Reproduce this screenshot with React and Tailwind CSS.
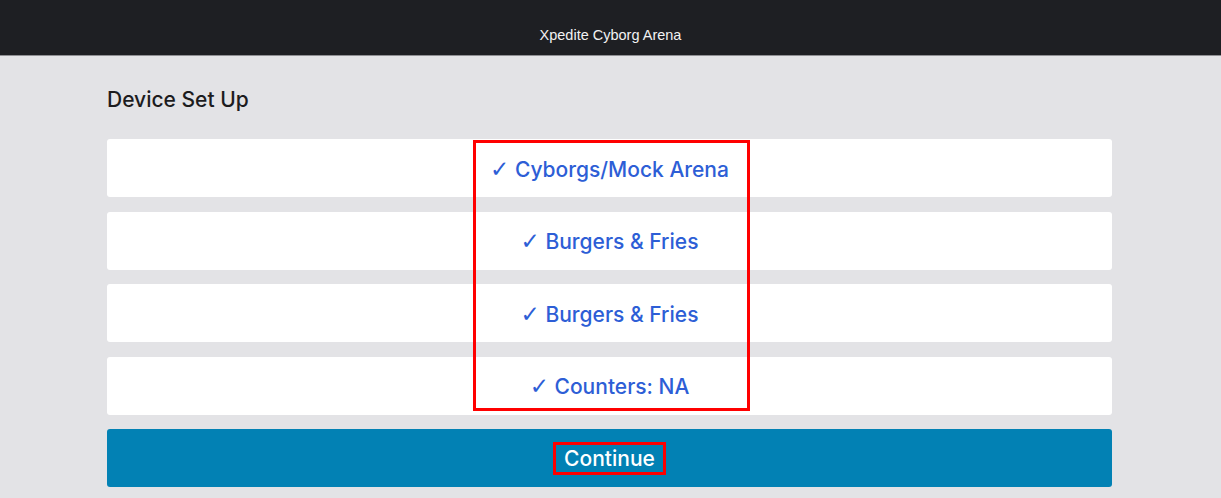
import React from "react";

const items = ["Cyborgs/Mock Arena", "Burgers & Fries", "Burgers & Fries", "Counters: NA"];

export default function App() {
  return (
    <div className="w-[1221px] h-[498px] bg-[#e3e3e6] overflow-hidden" style={{ fontFamily: "Inter, 'Liberation Sans', sans-serif" }}>
      <header className="h-[56px] bg-[#1e1f23] border-b border-[#8f8f93] flex justify-center pt-[27px]">
        <span className="text-[14.5px] leading-[17px] text-[#f2f2f2]" style={{ fontFamily: "'Liberation Sans', Arial, sans-serif" }}>
          Xpedite Cyborg Arena
        </span>
      </header>
      <main className="ml-[107px] w-[1005px] pt-[30px]">
        <h1 className="text-[21px] leading-[28px] font-medium text-[#1c1c1e]">Device Set Up</h1>
        <div className="relative mt-[25px] flex flex-col gap-[14.5px]">
          {items.map((t, i) => (
            <div key={i} className="h-[58px] bg-white rounded-[3px] flex items-center justify-center pt-[2px]">
              <span className="text-[21px] font-medium text-[#2d5ed6] leading-[28px]">
                <span className="text-[23px] font-bold" style={{ fontFamily: "'DejaVu Sans', sans-serif" }}>✓</span> {t}
              </span>
            </div>
          ))}
          <div className="absolute left-[366px] top-[1px] w-[277px] h-[271px] border-[3px] border-[#ff0000] pointer-events-none" />
          <button className="h-[58px] bg-[#0281b4] rounded-[3px] flex items-center justify-center">
            <span className="border-[3px] border-[#ff0000] px-[8px] text-[21px] leading-[27px] font-medium text-white">Continue</span>
          </button>
        </div>
      </main>
    </div>
  );
}
